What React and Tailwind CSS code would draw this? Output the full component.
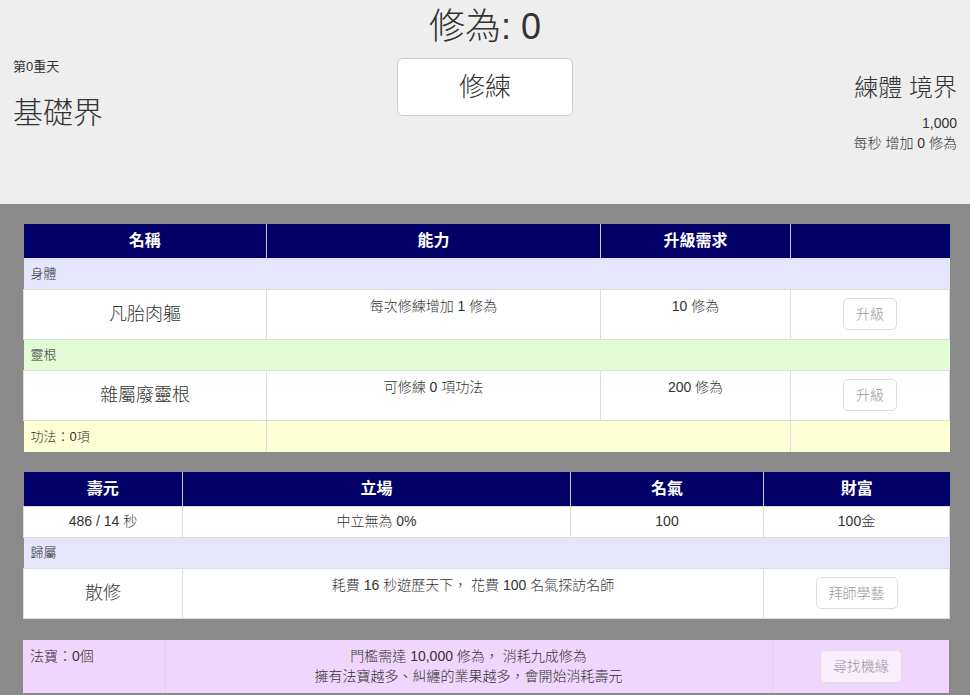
import React from 'react';

const font = "font-['Liberation_Sans','Noto_Sans_CJK_TC',sans-serif]";

const Btn = ({ children, className = '' }) => (
    <button className={`h-[32px] rounded-[5px] border border-[#dddddd] px-[12px] text-[14px] text-[#999999] ${className}`}>
        {children}
    </button>
);

const Th = ({ children, last }) => (
    <th className={`h-[34px] bg-[#000066] text-[16px] font-bold text-white ${last ? '' : 'border-r border-[#cccccc]'}`}>
        {children}
    </th>
);

const App = () => {
    return (
        <div className={`${font} text-[#333333]`}>
            {/* Header */}
            <div className="h-[204px] bg-[#eeeeee] grid grid-cols-[1fr_auto_1fr] px-[13px]">
                <div className="pt-[58px]">
                    <div className="text-[13px] leading-[18px]">第0重天</div>
                    <div className="mt-[16px] text-[30px] leading-[42px] font-light">基礎界</div>
                </div>
                <div className="flex flex-col items-center">
                    <div className="text-[36px] leading-[54px] font-light">修為: 0</div>
                    <button className="mt-[4px] w-[176px] h-[58px] rounded-[6px] border border-[#cccccc] bg-white text-[26px] font-light text-[#333333]">
                        修練
                    </button>
                </div>
                <div className="pt-[71px] flex flex-col items-end">
                    <div className="text-[24px] leading-[34px] font-light">練體 境界</div>
                    <div className="mt-[8px] text-[14px] leading-[20px] font-light">1,000</div>
                    <div className="text-[14px] leading-[20px] font-light">每秒 增加 0 修為</div>
                </div>
            </div>

            {/* Body */}
            <div className="bg-[#8a8a8a] pt-[20px] pb-[3px] pl-[23px] pr-[21px]">
                <table className="w-[926px] table-fixed border-collapse text-[14px] font-light">
                    <colgroup>
                        <col className="w-[243px]" />
                        <col className="w-[334px]" />
                        <col className="w-[190px]" />
                        <col className="w-[159px]" />
                    </colgroup>
                    <thead>
                        <tr>
                            <Th>名稱</Th>
                            <Th>能力</Th>
                            <Th>升級需求</Th>
                            <Th last></Th>
                        </tr>
                    </thead>
                    <tbody>
                        <tr className="h-[31px] bg-[#e5e5fc]">
                            <td colSpan={4} className="px-[7px] text-[13px]">身體</td>
                        </tr>
                        <tr className="h-[50px] bg-white">
                            <td className="border border-[#dddddd] text-center text-[18px]">凡胎肉軀</td>
                            <td className="border border-[#dddddd] text-center align-top pt-[6px]">每次修練增加 1 修為</td>
                            <td className="border border-[#dddddd] text-center align-top pt-[6px]">10 修為</td>
                            <td className="border border-[#dddddd] text-center"><Btn>升級</Btn></td>
                        </tr>
                        <tr className="h-[31px] bg-[#e2fdd6]">
                            <td colSpan={4} className="px-[7px] text-[13px]">靈根</td>
                        </tr>
                        <tr className="h-[50px] bg-white">
                            <td className="border border-[#dddddd] text-center text-[18px]">雜屬廢靈根</td>
                            <td className="border border-[#dddddd] text-center align-top pt-[6px]">可修練 0 項功法</td>
                            <td className="border border-[#dddddd] text-center align-top pt-[6px]">200 修為</td>
                            <td className="border border-[#dddddd] text-center"><Btn>升級</Btn></td>
                        </tr>
                        <tr className="h-[32px] bg-[#ffffd6]">
                            <td className="border-r border-[#dddddd] px-[7px] text-[13px]">功法：0項</td>
                            <td colSpan={2} className="border-r border-[#dddddd]"></td>
                            <td></td>
                        </tr>
                    </tbody>
                </table>

                <table className="mt-[20px] w-[926px] table-fixed border-collapse text-[14px] font-light">
                    <colgroup>
                        <col className="w-[159px]" />
                        <col className="w-[388px]" />
                        <col className="w-[193px]" />
                        <col className="w-[186px]" />
                    </colgroup>
                    <thead>
                        <tr>
                            <Th>壽元</Th>
                            <Th>立場</Th>
                            <Th>名氣</Th>
                            <Th last>財富</Th>
                        </tr>
                    </thead>
                    <tbody>
                        <tr className="h-[31px] bg-white">
                            <td className="border border-[#dddddd] text-center">486 / 14 秒</td>
                            <td className="border border-[#dddddd] text-center">中立無為 0%</td>
                            <td className="border border-[#dddddd] text-center">100</td>
                            <td className="border border-[#dddddd] text-center">100金</td>
                        </tr>
                        <tr className="h-[31px] bg-[#e5e5fc]">
                            <td colSpan={4} className="px-[7px] text-[13px]">歸屬</td>
                        </tr>
                        <tr className="h-[50px] bg-white">
                            <td className="border border-[#dddddd] text-center text-[18px]">散修</td>
                            <td colSpan={2} className="border border-[#dddddd] text-center align-top pt-[6px]">
                                耗費 16 秒遊歷天下， 花費 100 名氣探訪名師
                            </td>
                            <td className="border border-[#dddddd] text-center"><Btn>拜師學藝</Btn></td>
                        </tr>
                    </tbody>
                </table>

                <table className="mt-[21px] w-[926px] table-fixed border-collapse text-[14px] font-light bg-[#f0d6fc]">
                    <colgroup>
                        <col className="w-[142px]" />
                        <col className="w-[607px]" />
                        <col className="w-[177px]" />
                    </colgroup>
                    <tbody>
                        <tr className="h-[53px]">
                            <td className="border-r border-[#e8cdf2] px-[7px] align-top pt-[6px]">法寶：0個</td>
                            <td className="border-r border-[#e8cdf2] text-center align-top pt-[6px] leading-[20px]">
                                <div>門檻需達 10,000 修為， 消耗九成修為</div>
                                <div>擁有法寶越多、糾纏的業果越多，會開始消耗壽元</div>
                            </td>
                            <td className="text-center">
                                <Btn className="bg-[#faeefe] h-[33px]">尋找機緣</Btn>
                            </td>
                        </tr>
                    </tbody>
                </table>
            </div>
        </div>
    );
};

export default App;
